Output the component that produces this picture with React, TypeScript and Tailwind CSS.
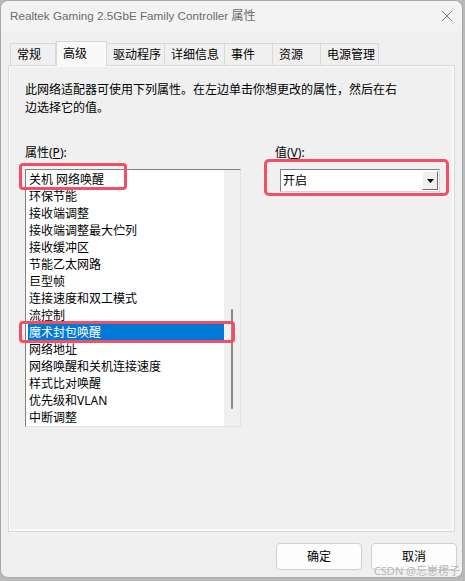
import React from "react";

const tabs = [
  { label: "常规", w: "w-[46px]" },
  { label: "高级", w: "w-[51px]", active: true },
  { label: "驱动程序", w: "w-[58px]" },
  { label: "详细信息", w: "w-[60px]" },
  { label: "事件", w: "w-[48px]" },
  { label: "资源", w: "w-[48px]" },
  { label: "电源管理", w: "w-[58px]" },
];

const props = [
  "关机 网络唤醒",
  "环保节能",
  "接收端调整",
  "接收端调整最大伫列",
  "接收缓冲区",
  "节能乙太网路",
  "巨型帧",
  "连接速度和双工模式",
  "流控制",
  "魔术封包唤醒",
  "网络地址",
  "网络唤醒和关机连接速度",
  "样式比对唤醒",
  "优先级和VLAN",
  "中断调整",
];

const SELECTED = 9;

export default function App() {
  return (
    <div
      className="w-[465px] h-[581px] bg-[#b9b9b9] overflow-hidden"
      style={{ fontFamily: '"Noto Sans", "Noto Sans CJK SC", sans-serif' }}
    >
      <div className="w-[463px] h-[578px] bg-[#f0f0f0] rounded-lg border border-[#a8a8a8] flex flex-col relative">
        {/* title bar */}
        <div className="h-[30px] flex items-center justify-between pl-[9px] pr-[8px] bg-[#f3f3f3] rounded-t-lg">
          <span
            className="text-[11.7px] text-[#6b6b6b] leading-none"
            style={{ fontFamily: '"Liberation Sans", "Noto Sans CJK SC", sans-serif' }}
          >
            Realtek Gaming 2.5GbE Family Controller <span className="text-[12px]">属性</span>
          </span>
          <svg width="12" height="12" viewBox="0 0 12 12" className="mr-[1px]">
            <path d="M1 1 L11 11 M11 1 L1 11" stroke="#7a7a7a" strokeWidth="1" />
          </svg>
        </div>

        {/* tabs */}
        <div className="flex items-end h-[34px] pl-[9px]">
          {tabs.map((t, i) =>
            t.active ? (
              <div
                key={t.label}
                className={`${t.w} h-[25px] -mb-[1px] z-10 bg-[#f9f9f9] border border-[#d9d9d9] border-b-0 text-[12px] text-black pl-[6px] pt-[3px]`}
              >
                {t.label}
              </div>
            ) : (
              <div
                key={t.label}
                className={`${t.w} h-[22px] bg-[#f0f0f0] border-t border-r border-[#d9d9d9] ${
                  i === 0 ? "border-l" : ""
                } text-[12px] text-black pl-[6px] pt-[3px] leading-[15px]`}
              >
                {t.label}
              </div>
            )
          )}
        </div>

        {/* tab page */}
        <div className="mx-[7px] h-[467px] border border-[#dadada] bg-[#f9f9f9] p-px">
          <div className="h-full bg-[#f0f0f0] border-r border-b border-[#fafafa] pl-[15px] pt-[14px] relative">
            <p className="text-[12px] leading-[18px] text-black w-[380px]">
              此网络适配器可使用下列属性。在左边单击你想更改的属性，然后在右边选择它的值。
            </p>

            <div className="flex mt-[30px]">
              {/* property list */}
              <div className="flex flex-col">
                <div className="text-[12px] leading-[12px] text-black mb-[10px] h-[12px]">
                  属性(<span className="underline">P</span>):
                </div>
                <div className="w-[216px] h-[258px] border border-t-[#828282] border-l-[#828282] border-r-[#e3e3e3] border-b-[#e3e3e3] bg-white flex relative">
                  <div className="flex-1 pt-px pl-[2px]">
                    {props.map((p, i) => (
                      <div
                        key={p}
                        className={`h-[17px] text-[12px] leading-[17px] pl-[1px] ${
                          i === SELECTED ? "bg-[#0078d7] text-white" : "text-black"
                        }`}
                      >
                        {p}
                      </div>
                    ))}
                  </div>
                  <div className="w-[16px] bg-[#f0f0f0] flex justify-center">
                    <div className="w-[2px] h-[100px] mt-[139px] bg-[#8a8a8a] rounded-full" />
                  </div>
                  {/* highlight boxes */}
                  <div className="absolute left-[-7px] top-[-7px] w-[108px] h-[27px] border-[3px] border-[#f24f66] rounded-[4px]" />
                  <div className="absolute left-[-7px] top-[151px] w-[216px] h-[22px] border-[3px] border-[#f24f66] rounded-[4px]" />
                </div>
              </div>

              {/* value */}
              <div className="flex flex-col ml-[39px]">
                <div className="text-[12px] leading-[12px] text-black mb-[10px] h-[12px] -ml-[5px]">
                  值(<span className="underline">V</span>):
                </div>
                <div className="w-[160px] h-[23px] border border-t-[#828282] border-l-[#828282] border-r-[#d6d6d6] border-b-[#d6d6d6] bg-white flex items-center relative">
                  <span className="flex-1 text-[12px] text-black pl-[2px] leading-none">开启</span>
                  <div className="w-[16px] h-[19px] mr-px bg-[#f0f0f0] border border-t-[#fdfdfd] border-l-[#fdfdfd] border-r-[#6b6b6b] border-b-[#6b6b6b] flex items-center justify-center">
                    <svg width="7" height="4" viewBox="0 0 7 4">
                      <path d="M0 0 H7 L3.5 4 Z" fill="#000" />
                    </svg>
                  </div>
                  <div className="absolute left-[-17px] top-[-11px] w-[185px] h-[37px] border-[3px] border-[#f24f66] rounded-[5px]" />
                </div>
              </div>
            </div>
          </div>
        </div>

        {/* buttons */}
        <div className="flex justify-end gap-[9px] pr-[5px] mt-[11px]">
          <button className="w-[86px] h-[27px] bg-[#fdfdfd] border border-[#d0d0d0] rounded-[4px] text-[12px] text-black">
            确定
          </button>
          <button className="w-[86px] h-[27px] bg-[#fdfdfd] border border-[#d0d0d0] rounded-[4px] text-[12px] text-black">
            取消
          </button>
        </div>

        <span className="absolute right-[2px] bottom-[1px] text-[11px] leading-none text-[#b8b8b8]">
          CSDN @忘崽楞子
        </span>
      </div>
    </div>
  );
}
